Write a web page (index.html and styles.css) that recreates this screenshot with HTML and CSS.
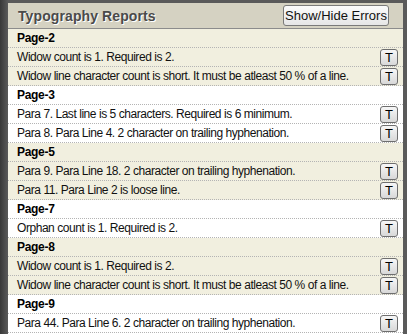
FILE: index.html
```html
<!DOCTYPE html>
<html lang="en">
<head>
  <meta charset="UTF-8">
  <title>Typography Reports</title>
  <link rel="stylesheet" href="styles.css">
</head>
<body>
  <div id="panel">
    <div id="head">
      <span id="title">Typography Reports</span>
      <button id="toggle">Show/Hide Errors</button>
    </div>
    <div class="group odd">
      <div class="page">Page-2</div>
      <div class="row"><span>Widow count is 1. Required is 2.</span><button class="t">T</button></div>
      <div class="row"><span>Widow line character count is short. It must be atleast 50 % of a line.</span><button class="t">T</button></div>
    </div>
    <div class="group">
      <div class="page">Page-3</div>
      <div class="row"><span>Para 7. Last line is 5 characters. Required is 6 minimum.</span><button class="t">T</button></div>
      <div class="row"><span>Para 8. Para Line 4. 2 character on trailing hyphenation.</span><button class="t">T</button></div>
    </div>
    <div class="group odd">
      <div class="page">Page-5</div>
      <div class="row"><span>Para 9. Para Line 18. 2 character on trailing hyphenation.</span><button class="t">T</button></div>
      <div class="row"><span>Para 11. Para Line 2 is loose line.</span><button class="t">T</button></div>
    </div>
    <div class="group">
      <div class="page">Page-7</div>
      <div class="row"><span>Orphan count is 1. Required is 2.</span><button class="t">T</button></div>
    </div>
    <div class="group odd">
      <div class="page">Page-8</div>
      <div class="row"><span>Widow count is 1. Required is 2.</span><button class="t">T</button></div>
      <div class="row"><span>Widow line character count is short. It must be atleast 50 % of a line.</span><button class="t">T</button></div>
    </div>
    <div class="group">
      <div class="page">Page-9</div>
      <div class="row"><span>Para 44. Para Line 6. 2 character on trailing hyphenation.</span><button class="t">T</button></div>
    </div>
  </div>
</body>
</html>
```
FILE: styles.css
```css
body{
  margin: 0;
  background: linear-gradient(to right, #383838, #5a5a5a 8px, #5a5a5a);
  font-family: "Liberation Sans", Arial, sans-serif;
  height: 334px;
  overflow: hidden;
}
#panel{
  margin: 3px 4px 0 8px;
  background: #fff;
  height: 331px;
}
#head{
  background: #d5d2c2;
  height: 25px;
  border-bottom: 1px solid #8c8c8c;
  display: flex;
  align-items: center;
  justify-content: space-between;
  padding: 0 14px 0 10px;
}
#title{
  font-size: 14px;
  letter-spacing: 0.1px;
  font-weight: bold;
  color: #4a4a4a;
  text-shadow: 1px 1px 0 #fff;
}
#toggle{
  font-family: "Liberation Sans", Arial, sans-serif;
  font-size: 13px;
  height: 21px;
  width: 106px;
  padding: 0;
  color: #111;
  background: linear-gradient(#fbfbfb, #e6e6e6);
  border: 1px solid #7a7a7a;
  border-radius: 3px;
}
.group{
  background: #fff;
}
.group.odd{
  background: #f1efdf;
}
.page, .row{
  height: 18px;
  border-bottom: 1px dotted #b4b4b4;
  display: flex;
  align-items: center;
  padding: 0 5px 0 9px;
  font-size: 12px;
  letter-spacing: -0.45px;
  white-space: nowrap;
  color: #111;
}
.page{
  font-weight: bold;
  letter-spacing: -0.3px;
  color: #000;
}
.row span{
  flex: 1;
}
.t{
  width: 18px;
  height: 17px;
  padding: 0;
  font-family: "Liberation Sans", Arial, sans-serif;
  font-size: 13px;
  line-height: 13px;
  color: #000;
  background: linear-gradient(#f7f7f7, #d8d8d8);
  border: 1px solid #6e6e6e;
  border-radius: 3px;
}
```
